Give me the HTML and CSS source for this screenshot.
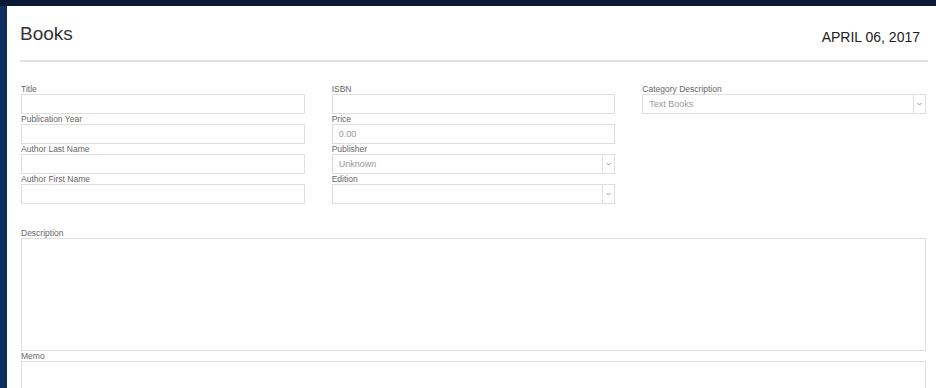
FILE: index.html
```html
<!DOCTYPE html>
<html>
<head>
<meta charset="utf-8">
<link rel="stylesheet" href="styles.css">
</head>
<body>
<div class="topbar"></div>
<div class="frame">
  <div class="sidebar"></div>
  <main class="main">
    <header class="header">
      <h1 class="title">Books</h1>
      <div class="date">APRIL 06, 2017</div>
    </header>
    <section class="form">
      <div class="grid">
        <div class="col">
          <div class="field"><div class="label">Title</div><div class="input"></div></div>
          <div class="field"><div class="label">Publication Year</div><div class="input"></div></div>
          <div class="field"><div class="label">Author Last Name</div><div class="input"></div></div>
          <div class="field"><div class="label">Author First Name</div><div class="input"></div></div>
        </div>
        <div class="col">
          <div class="field"><div class="label">ISBN</div><div class="input"></div></div>
          <div class="field"><div class="label">Price</div><div class="input"><span class="ph">0.00</span></div></div>
          <div class="field"><div class="label">Publisher</div><div class="input select"><span class="ph">Unknown</span><span class="addon"><svg width="5" height="4" viewBox="0 0 5 4"><polyline points="0.5,1 2.5,3 4.5,1" fill="none" stroke="#999" stroke-width="1"/></svg></span></div></div>
          <div class="field"><div class="label">Edition</div><div class="input select"><span class="ph"></span><span class="addon"><svg width="5" height="4" viewBox="0 0 5 4"><polyline points="0.5,1 2.5,3 4.5,1" fill="none" stroke="#999" stroke-width="1"/></svg></span></div></div>
        </div>
        <div class="col">
          <div class="field"><div class="label">Category Description</div><div class="input select"><span class="ph">Text Books</span><span class="addon"><svg width="5" height="4" viewBox="0 0 5 4"><polyline points="0.5,1 2.5,3 4.5,1" fill="none" stroke="#999" stroke-width="1"/></svg></span></div></div>
        </div>
      </div>
      <div class="wide">
        <div class="label">Description</div>
        <div class="textarea desc"></div>
        <div class="label">Memo</div>
        <div class="textarea memo"></div>
      </div>
    </section>
  </main>
</div>
</body>
</html>
```

FILE: styles.css
```css
html, body {
  margin: 0;
  padding: 0;
  background: #fff;
  font-family: "Liberation Sans", Arial, sans-serif;
  overflow: hidden;
}
.topbar {
  height: 6px;
  background: #0b1a33;
}
.frame {
  display: flex;
  height: 382px;
}
.sidebar {
  width: 7px;
  flex: none;
  background: #0e2e60;
}
.main {
  flex: 1;
  min-width: 0;
}
.header {
  display: flex;
  justify-content: space-between;
  align-items: flex-start;
  margin: 0 8px 0 13px;
  padding: 17px 8px 15px 0;
  border-bottom: 2px solid #e0e0e0;
}
.title {
  margin: 0;
  font-size: 19px;
  line-height: 22px;
  font-weight: normal;
  color: #333;
}
.date {
  margin-top: 6px;
  font-size: 14px;
  line-height: 16px;
  color: #222;
}
.form {
  margin: 22px 10px 0 14px;
}
.grid {
  display: grid;
  grid-template-columns: 1fr 1fr 1fr;
  column-gap: 27px;
}
.col {
  display: flex;
  flex-direction: column;
}
.label {
  font-size: 8.5px;
  line-height: 10px;
  height: 10px;
  color: #666;
  white-space: nowrap;
}
.input {
  box-sizing: border-box;
  height: 20px;
  border: 1px solid #dedede;
  display: flex;
  align-items: center;
  font-size: 9px;
}
.ph {
  flex: 1;
  padding-left: 6px;
  color: #999;
}
.addon {
  align-self: stretch;
  width: 11px;
  border-left: 1px solid #dedede;
  display: flex;
  align-items: center;
  justify-content: center;
}
.addon svg {
  display: block;
}
.wide {
  margin-top: 24px;
}
.textarea {
  box-sizing: border-box;
  border: 1px solid #dedede;
}
.desc {
  height: 113px;
}
.memo {
  height: 40px;
}
```
